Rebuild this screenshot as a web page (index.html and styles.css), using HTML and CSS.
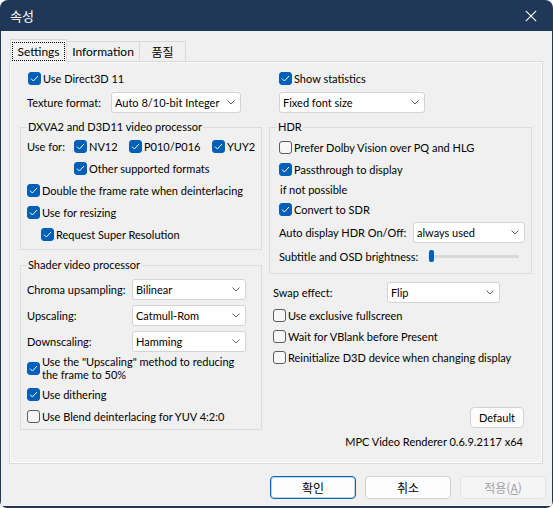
FILE: index.html
```html
<!DOCTYPE html>
<html lang="ko">
<head>
<meta charset="utf-8">
<title>속성</title>
<link rel="stylesheet" href="styles.css">
</head>
<body>
<div class="window">
  <div class="titlebar">
    <span class="title">속성</span>
    <svg class="close" viewBox="0 0 12 12"><path d="M0.8 0.8L11.2 11.2M11.2 0.8L0.8 11.2"/></svg>
  </div>
  <div class="client">
    <div class="tabs">
      <div class="tab active"><span class="focus">Settings</span></div>
      <div class="tab t-info">Information</div>
      <div class="tab t-q">품질</div>
    </div>
    <div class="panel">
      <div class="col">
        <div class="ck pl8"><span class="box on"><svg viewBox="0 0 11 11"><path d="M2 5.6L4.4 8 9 3"/></svg></span>Use Direct3D 11</div>
        <div class="row pl7 mt2"><span class="lbl w84">Texture format:</span><div class="combo w130"><span>Auto 8/10-bit Integer</span><svg class="chev" viewBox="0 0 8 5"><path d="M0.5 0.5L4 4L7.5 0.5"/></svg></div></div>

        <div class="group gl mt14">
          <div class="gtitle">DXVA2 and D3D11 video processor</div>
          <div class="ck">
            <span class="lbl w47">Use for:</span>
            <span class="item w55"><span class="box on"><svg viewBox="0 0 11 11"><path d="M2 5.6L4.4 8 9 3"/></svg></span>NV12</span>
            <span class="item w83"><span class="box on"><svg viewBox="0 0 11 11"><path d="M2 5.6L4.4 8 9 3"/></svg></span>P010/P016</span>
            <span class="item"><span class="box on"><svg viewBox="0 0 11 11"><path d="M2 5.6L4.4 8 9 3"/></svg></span>YUY2</span>
          </div>
          <div class="ck pl47"><span class="box on"><svg viewBox="0 0 11 11"><path d="M2 5.6L4.4 8 9 3"/></svg></span>Other supported formats</div>
          <div class="ck"><span class="box on"><svg viewBox="0 0 11 11"><path d="M2 5.6L4.4 8 9 3"/></svg></span>Double the frame rate when deinterlacing</div>
          <div class="ck"><span class="box on"><svg viewBox="0 0 11 11"><path d="M2 5.6L4.4 8 9 3"/></svg></span>Use for resizing</div>
          <div class="ck pl14"><span class="box on"><svg viewBox="0 0 11 11"><path d="M2 5.6L4.4 8 9 3"/></svg></span>Request Super Resolution</div>
        </div>

        <div class="group gl2 mt15">
          <div class="gtitle">Shader video processor</div>
          <div class="row mt5"><span class="lbl w105">Chroma upsampling:</span><div class="combo w114"><span>Bilinear</span><svg class="chev" viewBox="0 0 8 5"><path d="M0.5 0.5L4 4L7.5 0.5"/></svg></div></div>
          <div class="row mt4"><span class="lbl w105">Upscaling:</span><div class="combo w114"><span>Catmull-Rom</span><svg class="chev" viewBox="0 0 8 5"><path d="M0.5 0.5L4 4L7.5 0.5"/></svg></div></div>
          <div class="row mt4"><span class="lbl w105">Downscaling:</span><div class="combo w114"><span>Hamming</span><svg class="chev" viewBox="0 0 8 5"><path d="M0.5 0.5L4 4L7.5 0.5"/></svg></div></div>
          <div class="ck2 mt3"><span class="box on"><svg viewBox="0 0 11 11"><path d="M2 5.6L4.4 8 9 3"/></svg></span><span class="twol">Use the "Upscaling" method to reducing<br>the frame to 50%</span></div>
          <div class="ck mt2"><span class="box on"><svg viewBox="0 0 11 11"><path d="M2 5.6L4.4 8 9 3"/></svg></span>Use dithering</div>
          <div class="ck"><span class="box"></span>Use Blend deinterlacing for YUV 4:2:0</div>
        </div>
      </div>

      <div class="col">
        <div class="ck pl10"><span class="box on"><svg viewBox="0 0 11 11"><path d="M2 5.6L4.4 8 9 3"/></svg></span>Show statistics</div>
        <div class="row pl10 mt2"><div class="combo w146"><span>Fixed font size</span><svg class="chev" viewBox="0 0 8 5"><path d="M0.5 0.5L4 4L7.5 0.5"/></svg></div></div>

        <div class="group gr mt14">
          <div class="gtitle gt-hdr">HDR</div>
          <div class="ck mt1"><span class="box"></span>Prefer Dolby Vision over PQ and HLG</div>
          <div class="ck"><span class="box on"><svg viewBox="0 0 11 11"><path d="M2 5.6L4.4 8 9 3"/></svg></span>Passthrough to display</div>
          <div class="txtrow">if not possible</div>
          <div class="ck"><span class="box on"><svg viewBox="0 0 11 11"><path d="M2 5.6L4.4 8 9 3"/></svg></span>Convert to SDR</div>
          <div class="row mt1"><span class="lbl w134">Auto display HDR On/Off:</span><div class="combo w112"><span>always used</span><svg class="chev" viewBox="0 0 8 5"><path d="M0.5 0.5L4 4L7.5 0.5"/></svg></div></div>
          <div class="row mt2"><span class="lbl w149">Subtitle and OSD brightness:</span><div class="slider"><div class="track"></div><div class="thumb"></div></div></div>
        </div>

        <div class="row pl4 mt7"><span class="lbl w114">Swap effect:</span><div class="combo w113"><span>Flip</span><svg class="chev" viewBox="0 0 8 5"><path d="M0.5 0.5L4 4L7.5 0.5"/></svg></div></div>
        <div class="ck h21 pl4 mt2"><span class="box"></span>Use exclusive fullscreen</div>
        <div class="ck h21 pl4"><span class="box"></span>Wait for VBlank before Present</div>
        <div class="ck h21 pl4"><span class="box"></span>Reinitialize D3D device when changing display</div>

        <div class="btn-default">Default</div>
        <div class="ver">MPC Video Renderer 0.6.9.2117 x64</div>
      </div>
    </div>

    <div class="buttons">
      <div class="btn primary">확인</div>
      <div class="btn">취소</div>
      <div class="btn disabled">적용(<u>A</u>)</div>
    </div>
  </div>
</div>
</body>
</html>
```
FILE: styles.css
```css
* { box-sizing: border-box; }
html, body { margin: 0; background: #ffffff; }
body {
  font-family: Lato, "Noto Sans CJK KR", sans-serif;
  font-size: 11px;
  color: #000;
}

.window {
  width: 553px;
  height: 508px;
  background: #203757;
  border-radius: 8px 8px 7px 7px;
  display: flex;
  flex-direction: column;
  padding: 0 1px 2px 1px;
  overflow: hidden;
}

.titlebar {
  height: 31px;
  flex: none;
  display: flex;
  align-items: center;
  justify-content: space-between;
  padding: 0 15px 0 9px;
}
.title {
  color: #fff;
  font-family: "Noto Sans CJK KR", sans-serif;
  font-size: 13px;
}
.close { width: 12px; height: 12px; }
.close path { stroke: #fff; stroke-width: 1.1; fill: none; }

.client {
  flex: 1;
  background: #f0f0f0;
  display: flex;
  flex-direction: column;
}

/* tabs */
.tabs {
  display: flex;
  align-items: flex-end;
  height: 22px;
  margin: 8px 0 0 9px;
}
.tab {
  height: 20px;
  border: 1px solid #d9d9d9;
  border-bottom: none;
  background: #f0f0f0;
  display: flex;
  align-items: center;
  justify-content: center;
  font-size: 12px;
  padding-bottom: 1px;
}
.tab.active {
  width: 57px;
  height: 23px;
  margin-bottom: -1px;
  position: relative;
  z-index: 2;
  background: #f3f3f3;
  align-items: flex-start;
  padding: 2px 1px 0 1px;
}
.focus {
  flex: 1;
  height: 19px;
  border: 1px dotted #000;
  display: flex;
  align-items: center;
  justify-content: center;
  padding-bottom: 1px;
}
.t-info { width: 74px; margin-left: -1px; }
.t-q { width: 47px; margin-left: -1px; font-family: "Noto Sans CJK KR", sans-serif; font-size: 12px; }

/* panel */
.panel {
  margin-left: 8px;
  width: 534px;
  height: 403px;
  flex: none;
  border: 1px solid #d9d9d9;
  box-shadow: inset 1px 1px 0 #fbfbfb, inset -1px -1px 0 #fbfbfb;
  padding: 5px 10px 0 10px;
  display: grid;
  grid-template-columns: 242px 263px;
  column-gap: 7px;
  align-items: start;
}
.col { display: flex; flex-direction: column; }

.row, .ck {
  display: flex;
  align-items: center;
  height: 22px;
  white-space: nowrap;
}
.h21 { height: 21px; }
.txtrow {
  height: 18px;
  display: flex;
  align-items: center;
  padding-left: 1px;
}
.item { display: flex; align-items: center; }
.lbl { flex: none; }

.box {
  width: 13px;
  height: 13px;
  flex: none;
  border: 1px solid #5c5c5c;
  border-radius: 3px;
  background: #f7f7f7;
  margin-right: 2px;
  display: flex;
}
.box.on { background: #005fb8; border-color: #005fb8; }
.box svg { width: 11px; height: 11px; }
.box path { stroke: #fff; stroke-width: 1; fill: none; }

.ck2 {
  display: flex;
  align-items: center;
  height: 26px;
}
.twol { line-height: 13px; white-space: nowrap; }

.combo {
  height: 21px;
  flex: none;
  background: #fff;
  border: 1px solid #d3d3d3;
  border-radius: 3px;
  display: flex;
  align-items: center;
  justify-content: space-between;
  padding: 0 5px 0 3px;
  white-space: nowrap;
}
.chev { width: 8px; height: 5px; flex: none; }
.chev path { stroke: #606060; stroke-width: 1; fill: none; }

.group {
  border: 1px solid #dcdcdc;
  display: flex;
  flex-direction: column;
}
.gl { padding: 0 0 4px 6px; }
.gl2 { padding: 0 0 2px 6px; }
.gr { padding: 0 0 6px 9px; }
.gtitle {
  margin-top: -9px;
  height: 16px;
  line-height: 16px;
  padding: 0 1px;
  background: #f0f0f0;
  width: max-content;
}
.gt-hdr { margin-left: -2px; }

.slider {
  width: 91px;
  height: 14px;
  position: relative;
  display: flex;
  align-items: center;
}
.track { width: 100%; height: 3px; background: #d9d9d9; border-radius: 1px; }
.thumb {
  position: absolute;
  left: 1px;
  top: 1px;
  width: 5px;
  height: 12px;
  background: #005fb8;
  border-radius: 2px;
}

.btn-default {
  align-self: flex-end;
  margin: 39px 8px 0 0;
  width: 54px;
  height: 21px;
  background: #fdfdfd;
  border: 1px solid #d0d0d0;
  border-radius: 4px;
  display: flex;
  align-items: center;
  justify-content: center;
}
.ver {
  margin-top: 6px;
  line-height: 16px;
  text-align: right;
  padding-right: 9px;
  white-space: nowrap;
}

/* spacing helpers */
.pl4 { padding-left: 4px; }
.pl7 { padding-left: 7px; }
.pl8 { padding-left: 8px; }
.pl10 { padding-left: 10px; }
.pl14 { padding-left: 14px; }
.pl47 { padding-left: 47px; }
.mt1 { margin-top: 1px; }
.mt2 { margin-top: 2px; }
.mt3 { margin-top: 3px; }
.mt4 { margin-top: 4px; }
.mt5 { margin-top: 5px; }
.mt7 { margin-top: 7px; }
.mt14 { margin-top: 14px; }
.mt15 { margin-top: 15px; }

.w47 { width: 47px; }
.w55 { width: 55px; }
.w83 { width: 83px; }
.w84 { width: 84px; }
.w105 { width: 105px; }
.w112 { width: 112px; }
.w113 { width: 113px; }
.w114 { width: 114px; }
.w130 { width: 130px; }
.w134 { width: 134px; }
.w146 { width: 146px; }
.w149 { width: 149px; }

/* dialog buttons */
.buttons {
  display: flex;
  justify-content: flex-end;
  gap: 9px;
  margin-top: 12px;
  padding-right: 6px;
}
.btn {
  width: 86px;
  height: 23px;
  background: #fdfdfd;
  border: 1px solid #d0d0d0;
  border-radius: 4px;
  display: flex;
  align-items: center;
  justify-content: center;
  font-family: "Noto Sans CJK KR", sans-serif;
  font-size: 12px;
}
.btn.primary { border-color: #0a64b4; box-shadow: inset 0 0 0 1px rgba(0, 95, 184, 0.25); }
.btn.disabled { color: #a0a0a0; background: #f5f5f5; border-color: #e3e3e3; }
```
